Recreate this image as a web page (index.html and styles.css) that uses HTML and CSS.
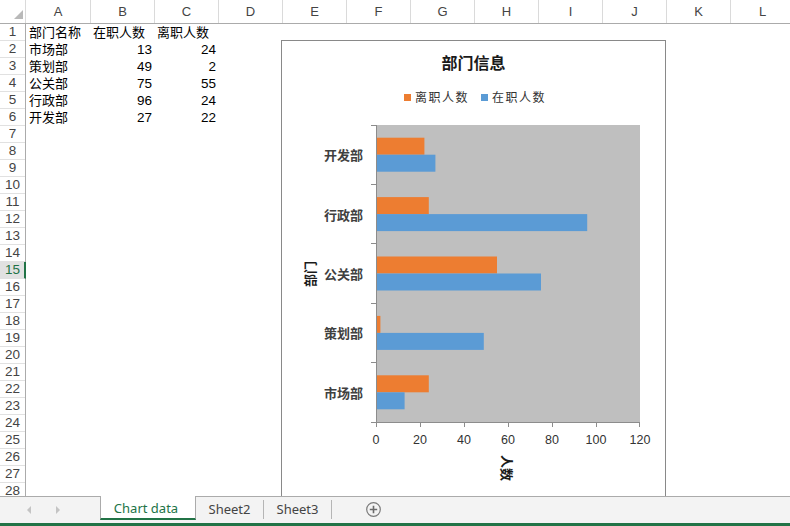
FILE: index.html
```html
<!DOCTYPE html>
<html lang="zh-CN">
<head>
<meta charset="utf-8">
<title>Chart data</title>
<link rel="stylesheet" href="styles.css">
</head>
<body>
<div class="sheet">
  <div class="colhead">
    <div class="corner"><span class="tri"></span></div>
    <div class="ch ch-a">A</div>
    <div class="ch">B</div>
    <div class="ch">C</div>
    <div class="ch">D</div>
    <div class="ch">E</div>
    <div class="ch">F</div>
    <div class="ch">G</div>
    <div class="ch">H</div>
    <div class="ch">I</div>
    <div class="ch">J</div>
    <div class="ch">K</div>
    <div class="ch">L</div>
  </div>
  <div class="body">
    <div class="rowhead">
      <div class="rh">1</div><div class="rh">2</div><div class="rh">3</div><div class="rh">4</div>
      <div class="rh">5</div><div class="rh">6</div><div class="rh">7</div><div class="rh">8</div>
      <div class="rh">9</div><div class="rh">10</div><div class="rh">11</div><div class="rh">12</div>
      <div class="rh">13</div><div class="rh">14</div><div class="rh rh-active">15</div><div class="rh">16</div>
      <div class="rh">17</div><div class="rh">18</div><div class="rh">19</div><div class="rh">20</div>
      <div class="rh">21</div><div class="rh">22</div><div class="rh">23</div><div class="rh">24</div>
      <div class="rh">25</div><div class="rh">26</div><div class="rh">27</div><div class="rh">28</div>
    </div>
    <div class="cells">
      <div class="c">部门名称</div><div class="c">在职人数</div><div class="c">离职人数</div>
      <div class="c">市场部</div><div class="c num">13</div><div class="c num">24</div>
      <div class="c">策划部</div><div class="c num">49</div><div class="c num">2</div>
      <div class="c">公关部</div><div class="c num">75</div><div class="c num">55</div>
      <div class="c">行政部</div><div class="c num">96</div><div class="c num">24</div>
      <div class="c">开发部</div><div class="c num">27</div><div class="c num">22</div>
    </div>
  </div>

  <div class="chart">
    <div class="chart-title">部门信息</div>
    <div class="legend">
      <span class="lg-item"><span class="sw sw-orange"></span>离职人数</span>
      <span class="lg-item"><span class="sw sw-blue"></span>在职人数</span>
    </div>
    <svg class="plot" width="383" height="380" viewBox="282 105 383 380">
      <rect x="376" y="125" width="264" height="297" fill="#bfbfbf"/>
      <rect x="376" y="137.7" width="48.4" height="17" fill="#ed7d31"/>
      <rect x="376" y="154.7" width="59.4" height="17" fill="#5b9bd5"/>
      <rect x="376" y="197.1" width="52.8" height="17" fill="#ed7d31"/>
      <rect x="376" y="214.1" width="211.2" height="17" fill="#5b9bd5"/>
      <rect x="376" y="256.5" width="121" height="17" fill="#ed7d31"/>
      <rect x="376" y="273.5" width="165" height="17" fill="#5b9bd5"/>
      <rect x="376" y="315.9" width="4.4" height="17" fill="#ed7d31"/>
      <rect x="376" y="332.9" width="107.8" height="17" fill="#5b9bd5"/>
      <rect x="376" y="375.3" width="52.8" height="17" fill="#ed7d31"/>
      <rect x="376" y="392.3" width="28.6" height="17" fill="#5b9bd5"/>
      <path d="M376.5 125 V422.5 H640 M371 125.5 H376 M371 184.5 H376 M371 243.5 H376 M371 303.5 H376 M371 362.5 H376 M371 422.5 H376 M376.5 422 V427 M420.5 422 V427 M464.5 422 V427 M508.5 422 V427 M552.5 422 V427 M596.5 422 V427 M639.5 422 V427" stroke="#8c8c8c" stroke-width="1" fill="none"/>
      <g class="cat">
        <text x="363" y="154.7">开发部</text>
        <text x="363" y="214.1">行政部</text>
        <text x="363" y="273.5">公关部</text>
        <text x="363" y="332.9">策划部</text>
        <text x="363" y="392.3">市场部</text>
      </g>
      <g class="val">
        <text x="376" y="440">0</text>
        <text x="420" y="440">20</text>
        <text x="464" y="440">40</text>
        <text x="508" y="440">60</text>
        <text x="552" y="440">80</text>
        <text x="596" y="440">100</text>
        <text x="640" y="440">120</text>
      </g>
      <text class="axt" transform="translate(507 468) rotate(90)">人数</text>
      <text class="axt" transform="translate(309 274) rotate(-90)">部门</text>
    </svg>
  </div>
</div>

<div class="tabbar">
  <div class="nav"><span class="arr arr-l"></span><span class="arr arr-r"></span></div>
  <div class="tab tab-active">Chart data</div>
  <div class="tab">Sheet2</div>
  <div class="tab">Sheet3</div>
  <div class="add">
    <svg width="15" height="15" viewBox="0 0 15 15">
      <circle cx="7.5" cy="7.5" r="6.8" fill="none" stroke="#7a7a7a" stroke-width="1.2"/>
      <path d="M7.5 3.8 V11.2 M3.8 7.5 H11.2" stroke="#6a6a6a" stroke-width="1.6"/>
    </svg>
  </div>
</div>
</body>
</html>
```

FILE: styles.css
```css
* { box-sizing: border-box; }
html, body { margin: 0; padding: 0; background: #fff; }
body {
  width: 790px;
  height: 526px;
  overflow: hidden;
  font-family: "Liberation Sans", "Noto Sans CJK SC", sans-serif;
  color: #000;
}

.sheet {
  position: relative;
  height: 496px;
  overflow: hidden;
}

.colhead {
  display: flex;
  height: 24px;
  border-bottom: 1px solid #ababab;
}
.corner {
  width: 26px;
  flex: none;
  border-right: 1px solid #dadada;
  display: flex;
  align-items: flex-end;
  justify-content: flex-end;
  padding: 0 2px 4px 0;
}
.tri {
  width: 0;
  height: 0;
  border-left: 9px solid transparent;
  border-bottom: 9px solid #b9b9b9;
}
.ch {
  width: 64px;
  flex: none;
  border-right: 1px solid #dadada;
  text-align: center;
  font-size: 13px;
  line-height: 23px;
  color: #444;
}
.ch-a { width: 65px; }

.body {
  display: flex;
}
.rowhead {
  width: 26px;
  flex: none;
  border-right: 1px solid #ababab;
}
.rh {
  height: 17px;
  border-bottom: 1px solid #e1e1e1;
  text-align: center;
  font-size: 13.5px;
  line-height: 16px;
  color: #444;
}
.rh-active {
  background: #e1e1e1;
  color: #217346;
  margin-right: -1px;
  border-right: 2px solid #217346;
  padding-left: 1px;
}

.cells {
  display: grid;
  grid-template-columns: 64px 64px 64px;
  grid-auto-rows: 17px;
  align-content: start;
  padding-left: 1px;
}
.c {
  font-family: "Liberation Sans", "Noto Sans CJK SC", sans-serif;
  font-size: 13px;
  line-height: 17px;
  padding: 0 3px 0 2px;
  white-space: nowrap;
}
.num { text-align: right; font-size: 13.5px; }

.chart {
  position: absolute;
  left: 281px;
  top: 40px;
  width: 385px;
  height: 480px;
  border: 1px solid #898989;
  background: #fff;
}
.chart-title {
  margin-top: 10px;
  height: 22px;
  line-height: 22px;
  text-align: center;
  font-family: "Noto Sans CJK SC", sans-serif;
  font-weight: 700;
  font-size: 16px;
  color: #1a1a1a;
}
.legend {
  margin-top: 16px;
  height: 16px;
  display: flex;
  justify-content: center;
  gap: 12px;
  padding-left: 3px;
  font-family: "Noto Sans CJK SC", sans-serif;
  font-size: 12px;
  line-height: 16px;
  letter-spacing: 1.5px;
  color: #333;
}
.lg-item {
  display: flex;
  align-items: center;
}
.sw {
  width: 7px;
  height: 7px;
  margin-right: 4px;
}
.sw-orange { background: #ed7d31; }
.sw-blue { background: #5b9bd5; }

.plot { display: block; }
.cat text {
  font-family: "Noto Sans CJK SC", sans-serif;
  font-weight: 700;
  font-size: 13px;
  fill: #404040;
  text-anchor: end;
  dominant-baseline: central;
}
.val text {
  font-family: "Liberation Sans", sans-serif;
  font-size: 12.5px;
  fill: #333;
  text-anchor: middle;
  dominant-baseline: central;
}
.axt {
  font-family: "Noto Sans CJK SC", sans-serif;
  font-weight: 700;
  font-size: 13px;
  fill: #1a1a1a;
  text-anchor: middle;
  dominant-baseline: central;
}

.tabbar {
  height: 30px;
  background: #f3f3f3;
  border-top: 1px solid #ababab;
  border-bottom: 3px solid #217346;
  display: flex;
  align-items: flex-start;
  font-family: "Noto Sans", "Liberation Sans", sans-serif;
  font-size: 13px;
  color: #444;
}
.nav {
  width: 100px;
  height: 26px;
  display: flex;
  align-items: center;
  padding-left: 27px;
  gap: 25px;
}
.arr {
  width: 0;
  height: 0;
  border-top: 4px solid transparent;
  border-bottom: 4px solid transparent;
}
.arr-l { border-right: 4px solid #c4c4c4; }
.arr-r { border-left: 4px solid #c4c4c4; }
.tab {
  width: 68px;
  height: 19px;
  margin-top: 3px;
  line-height: 19px;
  text-align: center;
  border-right: 1px solid #b5b5b5;
}
.tab-active {
  width: 96px;
  height: 24px;
  margin-top: -1px;
  line-height: 22px;
  background: #fff;
  color: #217346;
  border-left: 1px solid #ababab;
  border-right: 1px solid #ababab;
  border-bottom: 2px solid #217346;
  padding: 1px 4px 0 0;
}
.add {
  margin-left: 34px;
  margin-top: 5px;
  height: 15px;
}
.add svg { display: block; }
```
